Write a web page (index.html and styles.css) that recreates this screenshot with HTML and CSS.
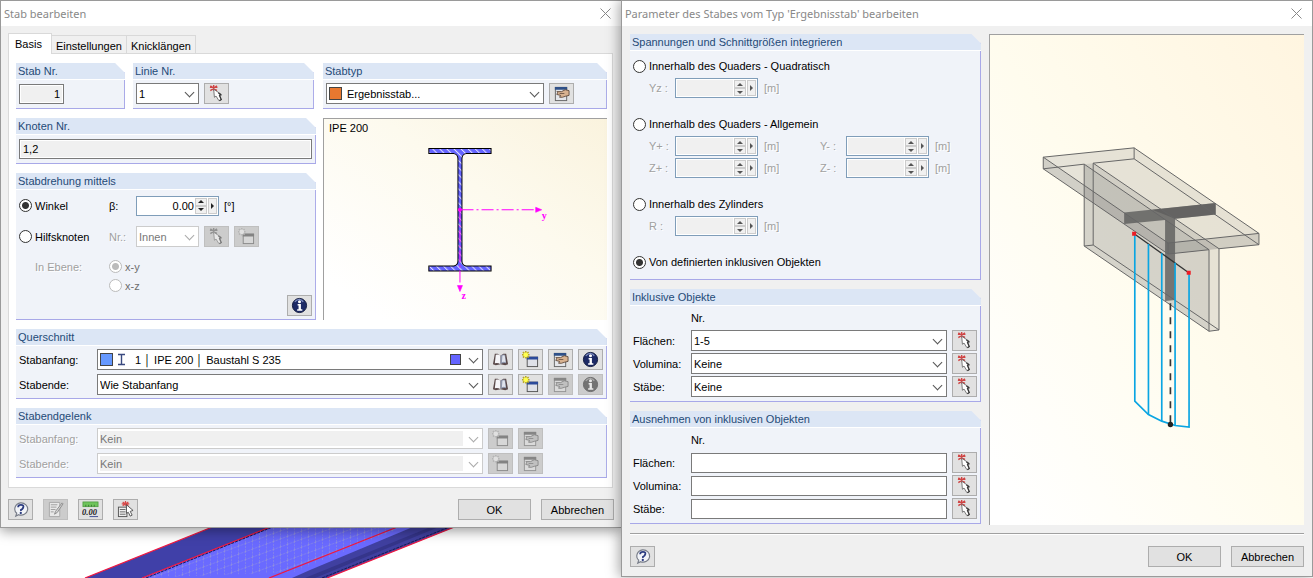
FILE: index.html
```html
<!DOCTYPE html>
<html lang="de">
<head>
  <meta charset="UTF-8" />
  <meta name="viewport" content="width=device-width, initial-scale=1.0" />
  <title>Stab bearbeiten</title>
  <link rel="stylesheet" href="styles.css">
</head>
<body>
  <!-- Icon sprites -->
  <svg class="sprites" aria-hidden="true">
    <symbol id="i-pick" viewBox="0 0 18 18">
      <path d="M2.500 1l7 5M9.500 1l-7 5M6 0v6M2 2.500h8" stroke="#d04545" stroke-width="1.500" fill="none"/>
      <path d="M6 4.500l.8 8.500 1.700-1.300 3 4.800 2.300-1-2-4.800 2-1z" fill="#fff" stroke="#666" stroke-width=".9"/>
      <path d="M11 8.500l2.800 2-1.500.6 1.800 4.400-2 1.200" stroke="#333" stroke-width="1.200" fill="none"/>
    </symbol>
    <symbol id="i-new" viewBox="0 0 18 18">
      <rect x="5.500" y="6.500" width="11" height="10" fill="#dfe1e8" stroke="#555"/>
      <path d="M5 6h12v3H5z" fill="#2c4a9a"/>
      <path d="M4 0v8M0 4h8M1 1l6 6M7 1L1 7" stroke="#b8a820" stroke-width="1.600"/>
      <circle cx="4" cy="4" r="2.500" fill="#ffff50"/>
    </symbol>
    <symbol id="i-edit" viewBox="0 0 18 18">
      <rect x="2.500" y="2.500" width="12" height="14" fill="#e4e6ea" stroke="#666"/>
      <path d="M2 2h13v3H2z" fill="#2f5088"/>
      <path d="M4 7h5l4-2 4 1v5l-4 1-3 1H7l1-2-4-1 1-2z" fill="#d8b290" stroke="#5a4538" stroke-width=".9"/>
      <path d="M7 9h5" stroke="#5a4538" stroke-width=".8"/>
    </symbol>
    <symbol id="i-book" viewBox="0 0 18 18">
      <path d="M1 14l2-11h3l3 2 3-2h3l2 11-3 1-5-1-5 1z" fill="#5a4a4a"/>
      <path d="M3 13l1-9q3-1 5 1v9q-3-2-6-1z" fill="#f5f5f8"/>
      <path d="M9 14V5q2-2 5-1l1 9q-3-1-6 1z" fill="#8f96aa"/>
      <path d="M11 5q2-1 2.500 0l1 7q-2-1-4 0z" fill="#dfe3ec"/>
    </symbol>
    <symbol id="i-info" viewBox="0 0 18 18">
      <circle cx="9" cy="9" r="7.500" fill="#1d2a66" stroke="#10183c"/>
      <path d="M4 5q5-5 9 0" stroke="#7c8bc0" stroke-width="1.500" fill="none"/>
      <circle cx="9" cy="5" r="1.600" fill="#fff"/>
      <path d="M7 7.500h3.500V13H12v1.500H6.500V13H8V9H7z" fill="#fff"/>
    </symbol>
    <symbol id="i-help" viewBox="0 0 18 18">
      <path d="M9 2a7 6.500 0 1 1-2 12.500L4 16l1-3A7 6.500 0 0 1 9 2z" fill="#f2f4f8" stroke="#777c88" stroke-width="1.200"/>
      <path d="M6.500 6.500q0-2.500 3-2.500t2.500 2.300-2.500 3v1.200" stroke="#2c3c80" stroke-width="1.900" fill="none"/>
      <circle cx="9.300" cy="12.700" r="1.200" fill="#2c3c80"/>
    </symbol>
    <symbol id="i-note" viewBox="0 0 18 18">
      <path d="M2.500 1.500h11v15h-11z" fill="#fff" stroke="#888"/>
      <path d="M4 4h7M4 6.500h6M4 9h5M4 11.500h3" stroke="#777"/>
      <path d="M16 2l-7 9-1 3 3-2 6-9z" fill="#ddd" stroke="#555"/>
    </symbol>
    <symbol id="i-units" viewBox="0 0 18 18">
      <rect x="1" y="1" width="16" height="5" fill="#6fc45c" stroke="#4d9a40" stroke-width=".8"/>
      <path d="M4 6V4M7 6V4M10 6V4M13 6V4" stroke="#2f6a28" stroke-width=".8"/>
      <path d="M8 16.500h9" stroke="#3a4a90"/>
    </symbol>
    <symbol id="i-list" viewBox="0 0 18 18">
      <rect x="1.500" y="6.500" width="9" height="10" fill="#eee" stroke="#555"/>
      <path d="M3 9h6M3 11.500h6M3 14h6" stroke="#666"/>
      <path d="M6 1l6 4M12 1L6 5M9 0v5M5 3h8" stroke="#d84a4a" stroke-width="1.300"/>
      <path d="M10 4v9l2-1 2 4 2-1-2-4 3-1z" fill="#fff" stroke="#444" stroke-width=".9"/>
    </symbol>
    <symbol id="i-close" viewBox="0 0 11 11">
      <path d="M.5.5l10 10M10.500.5l-10 10" stroke="#888" fill="none"/>
    </symbol>
  </svg>

  <main class="desktop">
    <!-- Beam model behind the dialogs -->
    <svg class="model" width="400" height="54" viewBox="0 -3 400 54" aria-hidden="true">
      <defs>
        <pattern id="mesh" width="7" height="8" patternUnits="userSpaceOnUse" patternTransform="skewY(-20)">
          <path d="M0 0h7M0 0v8" stroke="#a9a9c8" stroke-width=".7" stroke-dasharray="2 1" fill="none"/>
        </pattern>
      </defs>
      <path d="M15 51L150-3H208L72 51z" fill="#4040a8"/>
      <path d="M72 51L208-3H392L257 51z" fill="#6a6aff"/>
      <path d="M72 51L208-3H340L225 45z" fill="url(#mesh)"/>
      <path d="M222 51L240 43 350-3H392L257 51z" fill="#4040a0"/>
      <path d="M235 51L368-3H376L245 51z" fill="#35358a"/>
      <path d="M15 51L150-3M72 51L208-3M199 51L335-3M257 51L392-3" stroke="#f01840" stroke-width="1.300"/>
      <path d="M76 51L210-3M252 51L387-3" stroke="#181850" stroke-dasharray="3 1"/>
    </svg>

    <form class="dialog member">
      <header class="titlebar">
        <h1>Stab bearbeiten</h1>
        <button type="button" class="close" aria-label="Schließen"><svg><use href="#i-close"/></svg></button>
      </header>

      <div class="tabs" role="tablist">
        <button type="button" role="tab" class="tab active" aria-selected="true">Basis</button>
        <button type="button" role="tab" class="tab">Einstellungen</button>
        <button type="button" role="tab" class="tab">Knicklängen</button>
      </div>

      <div class="panel">
        <div class="basis">
          <div class="left">
            <div class="numbers">
              <section class="group">
                <h2><label for="stab">Stab Nr.</label></h2>
                <div class="row"><input id="stab" class="box short" type="text" value="1" readonly></div>
              </section>
              <section class="group">
                <h2><label for="linie">Linie Nr.</label></h2>
                <div class="row">
                  <span class="combo small"><select id="linie"><option>1</option></select></span>
                  <button type="button" class="tool" aria-label="Linie wählen"><svg><use href="#i-pick"/></svg></button>
                </div>
              </section>
            </div>

            <section class="group">
              <h2><label for="knoten">Knoten Nr.</label></h2>
              <div class="row"><input id="knoten" class="box" type="text" value="1,2" readonly></div>
            </section>

            <section class="group rotation">
              <h2>Stabdrehung mittels</h2>
              <div class="row">
                <label class="radio"><input type="radio" name="drehung" checked>Winkel</label>
                <label class="sym" for="beta">β:</label>
                <span class="spin">
                  <input id="beta" type="text" value="0.00">
                  <span class="steps"><button type="button" aria-label="Mehr"><i class="up"></i></button><button type="button" aria-label="Weniger"><i class="down"></i></button></span>
                  <button type="button" class="more" aria-label="Werte"><i></i></button>
                </span>
                <span class="unit">[°]</span>
              </div>
              <div class="row">
                <label class="radio"><input type="radio" name="drehung">Hilfsknoten</label>
                <label class="sym off" for="hilf">Nr.:</label>
                <span class="combo small"><select id="hilf" disabled><option>Innen</option></select></span>
                <button type="button" class="tool" disabled aria-label="Knoten wählen"><svg><use href="#i-pick"/></svg></button>
                <button type="button" class="tool" disabled aria-label="Neuer Knoten"><svg><use href="#i-new"/></svg></button>
              </div>
              <div class="row plane">
                <span class="plane-label off">In Ebene:</span>
                <div class="plane-options">
                  <label class="radio"><input type="radio" name="ebene" checked disabled>x-y</label>
                  <label class="radio"><input type="radio" name="ebene" disabled>x-z</label>
                </div>
              </div>
              <div class="row end">
                <button type="button" class="tool" aria-label="Info"><svg><use href="#i-info"/></svg></button>
              </div>
            </section>
          </div>

          <div class="right">
            <section class="group">
              <h2><label for="typ">Stabtyp</label></h2>
              <div class="row">
                <span class="combo typ"><i class="swatch orange"></i><select id="typ"><option>Ergebnisstab...</option></select></span>
                <button type="button" class="tool" aria-label="Stabtyp bearbeiten"><svg><use href="#i-edit"/></svg></button>
              </div>
            </section>

            <div class="preview section-preview">
              <svg viewBox="0 0 282 200" role="img" aria-label="IPE 200">
                <defs>
                  <pattern id="hatch" width="5" height="5" patternUnits="userSpaceOnUse" patternTransform="rotate(-45)">
                    <rect width="5" height="5" fill="#6464ff"/>
                    <path d="M0 0v5" stroke="#dcdcff" stroke-width="2"/>
                  </pattern>
                </defs>
                <text x="5" y="13" class="name">IPE 200</text>
                <path d="M104.500 29.500h62v5h-25q-4 1-4 5v102q0 4 4 5h25v5h-62v-5h25q4-1 4-5v-102q0-4-4-5h-25z" fill="url(#hatch)" stroke="#000"/>
                <path d="M137 90.500h75" stroke="#f0f" stroke-dasharray="12 3 2 3" />
                <path d="M135.500 91v75" stroke="#f0f" stroke-dasharray="12 3 2 3"/>
                <path d="M211 88v5l6-2.500zM133 166h5l-2.500 6z" fill="#f0f" stroke="#f0f" stroke-width=".6"/>
                <circle cx="135.500" cy="90.500" r="2" fill="#f0f"/>
                <text x="217" y="100" class="axis">y</text>
                <text x="137" y="179" class="axis">z</text>
              </svg>
            </div>
          </div>
        </div>

        <section class="group">
          <h2>Querschnitt</h2>
          <div class="sections">
            <label for="q1">Stabanfang:</label>
            <span class="combo profile">
              <i class="swatch blue"></i>
              <svg class="ibeam" viewBox="0 0 9 13"><path d="M1 1.500h7M1 11.500h7M4.500 1.500v10" stroke="#3a4a80" stroke-width="1.400" fill="none"/></svg>
              <select id="q1"><option>1 │ IPE 200 │ Baustahl S 235</option></select>
              <i class="swatch violet"></i>
            </span>
            <button type="button" class="tool" aria-label="Bibliothek"><svg><use href="#i-book"/></svg></button>
            <button type="button" class="tool" aria-label="Neu"><svg><use href="#i-new"/></svg></button>
            <button type="button" class="tool" aria-label="Bearbeiten"><svg><use href="#i-edit"/></svg></button>
            <button type="button" class="tool" aria-label="Info"><svg><use href="#i-info"/></svg></button>

            <label for="q2">Stabende:</label>
            <span class="combo"><select id="q2"><option>Wie Stabanfang</option></select></span>
            <button type="button" class="tool" aria-label="Bibliothek"><svg><use href="#i-book"/></svg></button>
            <button type="button" class="tool" aria-label="Neu"><svg><use href="#i-new"/></svg></button>
            <button type="button" class="tool" disabled aria-label="Bearbeiten"><svg><use href="#i-edit"/></svg></button>
            <button type="button" class="tool" disabled aria-label="Info"><svg><use href="#i-info"/></svg></button>
          </div>
        </section>

        <section class="group">
          <h2>Stabendgelenk</h2>
          <div class="sections hinges">
            <label class="off" for="g1">Stabanfang:</label>
            <span class="combo"><select id="g1" disabled><option>Kein</option></select></span>
            <button type="button" class="tool" disabled aria-label="Neu"><svg><use href="#i-new"/></svg></button>
            <button type="button" class="tool" disabled aria-label="Bearbeiten"><svg><use href="#i-edit"/></svg></button>

            <label class="off" for="g2">Stabende:</label>
            <span class="combo"><select id="g2" disabled><option>Kein</option></select></span>
            <button type="button" class="tool" disabled aria-label="Neu"><svg><use href="#i-new"/></svg></button>
            <button type="button" class="tool" disabled aria-label="Bearbeiten"><svg><use href="#i-edit"/></svg></button>
          </div>
        </section>
      </div>

      <footer>
        <button type="button" class="tool" aria-label="Hilfe"><svg><use href="#i-help"/></svg></button>
        <button type="button" class="tool" disabled aria-label="Kommentar"><svg><use href="#i-note"/></svg></button>
        <button type="button" class="tool" aria-label="Einheiten"><svg viewBox="0 0 18 18"><use href="#i-units"/><text x="0" y="15" class="digits">0.00</text></svg></button>
        <button type="button" class="tool" aria-label="Auswahl"><svg><use href="#i-list"/></svg></button>
        <button type="button" class="btn first">OK</button>
        <button type="button" class="btn">Abbrechen</button>
      </footer>
    </form>

    <form class="dialog params">
      <header class="titlebar">
        <h1>Parameter des Stabes vom Typ 'Ergebnisstab' bearbeiten</h1>
        <button type="button" class="close" aria-label="Schließen"><svg><use href="#i-close"/></svg></button>
      </header>

      <div class="content">
        <div class="options">
          <section class="group">
            <h2>Spannungen und Schnittgrößen integrieren</h2>
            <div class="methods">
              <div class="method">
                <label class="radio"><input type="radio" name="methode">Innerhalb des Quaders - Quadratisch</label>
                <div class="dims">
                  <label class="off" for="yz">Yz :</label>
                  <span class="spin"><input id="yz" type="text" disabled><span class="steps"><button type="button" disabled aria-label="Mehr"><i class="up"></i></button><button type="button" disabled aria-label="Weniger"><i class="down"></i></button></span><button type="button" class="more" disabled aria-label="Werte"><i></i></button></span>
                  <span class="off unit">[m]</span>
                </div>
              </div>
              <div class="method">
                <label class="radio"><input type="radio" name="methode">Innerhalb des Quaders - Allgemein</label>
                <div class="dims">
                  <label class="off" for="yp">Y+ :</label>
                  <span class="spin"><input id="yp" type="text" disabled><span class="steps"><button type="button" disabled aria-label="Mehr"><i class="up"></i></button><button type="button" disabled aria-label="Weniger"><i class="down"></i></button></span><button type="button" class="more" disabled aria-label="Werte"><i></i></button></span>
                  <span class="off unit">[m]</span>
                  <label class="off" for="ym">Y- :</label>
                  <span class="spin"><input id="ym" type="text" disabled><span class="steps"><button type="button" disabled aria-label="Mehr"><i class="up"></i></button><button type="button" disabled aria-label="Weniger"><i class="down"></i></button></span><button type="button" class="more" disabled aria-label="Werte"><i></i></button></span>
                  <span class="off unit">[m]</span>
                </div>
                <div class="dims">
                  <label class="off" for="zp">Z+ :</label>
                  <span class="spin"><input id="zp" type="text" disabled><span class="steps"><button type="button" disabled aria-label="Mehr"><i class="up"></i></button><button type="button" disabled aria-label="Weniger"><i class="down"></i></button></span><button type="button" class="more" disabled aria-label="Werte"><i></i></button></span>
                  <span class="off unit">[m]</span>
                  <label class="off" for="zm">Z- :</label>
                  <span class="spin"><input id="zm" type="text" disabled><span class="steps"><button type="button" disabled aria-label="Mehr"><i class="up"></i></button><button type="button" disabled aria-label="Weniger"><i class="down"></i></button></span><button type="button" class="more" disabled aria-label="Werte"><i></i></button></span>
                  <span class="off unit">[m]</span>
                </div>
              </div>
              <div class="method">
                <label class="radio"><input type="radio" name="methode">Innerhalb des Zylinders</label>
                <div class="dims">
                  <label class="off" for="r">R :</label>
                  <span class="spin"><input id="r" type="text" disabled><span class="steps"><button type="button" disabled aria-label="Mehr"><i class="up"></i></button><button type="button" disabled aria-label="Weniger"><i class="down"></i></button></span><button type="button" class="more" disabled aria-label="Werte"><i></i></button></span>
                  <span class="off unit">[m]</span>
                </div>
              </div>
              <div class="method">
                <label class="radio"><input type="radio" name="methode" checked>Von definierten inklusiven Objekten</label>
              </div>
            </div>
          </section>

          <section class="group">
            <h2>Inklusive Objekte</h2>
            <div class="objects">
              <span class="nr">Nr.</span>
              <label for="f1">Flächen:</label>
              <span class="combo"><select id="f1"><option>1-5</option></select></span>
              <button type="button" class="tool" aria-label="Flächen wählen"><svg><use href="#i-pick"/></svg></button>
              <label for="v1">Volumina:</label>
              <span class="combo"><select id="v1"><option>Keine</option></select></span>
              <button type="button" class="tool" aria-label="Volumina wählen"><svg><use href="#i-pick"/></svg></button>
              <label for="s1">Stäbe:</label>
              <span class="combo"><select id="s1"><option>Keine</option></select></span>
              <button type="button" class="tool" aria-label="Stäbe wählen"><svg><use href="#i-pick"/></svg></button>
            </div>
          </section>

          <section class="group">
            <h2>Ausnehmen von inklusiven Objekten</h2>
            <div class="objects">
              <span class="nr">Nr.</span>
              <label for="f2">Flächen:</label>
              <input id="f2" class="box" type="text">
              <button type="button" class="tool" aria-label="Flächen wählen"><svg><use href="#i-pick"/></svg></button>
              <label for="v2">Volumina:</label>
              <input id="v2" class="box" type="text">
              <button type="button" class="tool" aria-label="Volumina wählen"><svg><use href="#i-pick"/></svg></button>
              <label for="s2">Stäbe:</label>
              <input id="s2" class="box" type="text">
              <button type="button" class="tool" aria-label="Stäbe wählen"><svg><use href="#i-pick"/></svg></button>
            </div>
          </section>
        </div>

        <div class="preview beam-preview">
          <svg viewBox="0 -258 942 1473" role="img" aria-label="Ergebnisstab">
            <g fill="#777" fill-opacity=".18" stroke="none">
              <path d="M160 109L433 81 808 338V372L688 384 658 387 535 400 160 144z"/>
              <path d="M160 109L535 367V400L160 144z"/>
              <path d="M283 130L310 127 688 384V628L658 632 283 376z"/>
              <path d="M283 130L658 387V632L283 376z" fill-opacity=".15"/>
              <path d="M535 367L808 338V372L535 400z"/>
            </g>
            <path d="M403 275L678 247V281L556 294V538L526 541V298L403 310z" fill="#555" fill-opacity=".75"/>
            <path d="M488 267L678 247V281L556 294z" fill="#555" fill-opacity=".6"/>
            <g fill="none" stroke="#666" stroke-width="3">
              <path d="M160 109L433 81V114L310 127V373L283 376V130L160 144z"/>
              <path d="M535 367L808 338V372L688 384V628L658 632V387L535 400z"/>
              <path d="M160 109L535 367M433 81L808 338M433 114L808 372M310 127L688 384M310 373L688 628M283 376L658 632M283 130L658 387M160 144L535 400"/>
              <path d="M433 339L597 456" stroke="#333" stroke-width="4"/>
            </g>
            <g fill="none" stroke="#0aa5e2" stroke-width="5">
              <path d="M435 339V842L476 882 516 902 556 915 598 920V456"/>
              <path d="M476 370V882M516 398V902M556 426V915"/>
            </g>
            <path d="M542 548V912" stroke="#333" stroke-width="5" stroke-dasharray="21 21"/>
            <circle cx="542" cy="912" r="8" fill="#222"/>
            <path d="M427 333h12v12h-12zM591 450h12v12h-12z" fill="#ed1c24"/>
          </svg>
        </div>
      </div>

      <footer>
        <button type="button" class="tool" aria-label="Hilfe"><svg><use href="#i-help"/></svg></button>
        <button type="button" class="btn first">OK</button>
        <button type="button" class="btn">Abbrechen</button>
      </footer>
    </form>
  </main>
</body>
</html>
```
FILE: styles.css
```css
:root {
  --face: #f0f0f0;
  --group-bg: #f0f3f9;
  --group-head: #dce6f5;
  --group-edge: #a8a8e8;
  --head-text: #1f4a77;
  --btn-bg: #e1e1e1;
  --btn-border: #adadad;
  --field-border: #7a7a7a;
}

* {
  margin: 0;
  padding: 0;
  box-sizing: border-box;
}

body {
  background: #fff;
  color: #000;
  font: 11px/20px "Liberation Sans", Arial, sans-serif;
}

button, input, select {
  font: inherit;
  color: inherit;
  border-radius: 0;
}

svg { display: block; }

.sprites {
  position: absolute;
  width: 0;
  height: 0;
}

.desktop {
  position: relative;
  display: flex;
  align-items: flex-start;
  min-height: 100vh;
}

.model {
  position: absolute;
  left: 70px;
  bottom: 0;
}

/* Dialog windows */
.dialog {
  position: relative;
  background: var(--face);
  border: 1px solid #9a9a9a;
}
.member {
  flex: 621 1 0;
  border-right: 0;
  padding: 0 8px 0 7px;
  box-shadow: 0 3px 12px rgba(0, 0, 0, 0.4);
}
.params {
  flex: 692 1 0;
  padding: 0 8px;
  box-shadow: -2px 0 12px rgba(0, 0, 0, 0.35);
}

.titlebar {
  display: flex;
  align-items: center;
  justify-content: space-between;
  height: 25px;
  margin: 0 -8px;
  padding: 0 10px 0 3px;
  background: #fff;
}
.member .titlebar { margin-left: -7px; }
.titlebar h1 {
  font: 11px/20px "Noto Sans", "Open Sans", sans-serif;
  color: #888;
}
.close {
  border: 0;
  background: none;
}
.close svg {
  width: 11px;
  height: 11px;
}

/* Tabs */
.tabs {
  display: flex;
  align-items: flex-end;
  height: 27px;
}
.tab {
  height: 18px;
  padding: 0 4px;
  border: 1px solid #d9d9d9;
  border-width: 1px 1px 0 0;
  background: var(--face);
}
.tab.active {
  position: relative;
  height: 21px;
  margin-bottom: -1px;
  padding: 0 9px 2px 6px;
  border-left-width: 1px;
  background: #fff;
}
.panel {
  display: flex;
  flex-direction: column;
  gap: 9px;
  padding: 9px 5px 9px 7px;
  border: 1px solid #d9d9d9;
  background: #fff;
}
.basis {
  display: grid;
  grid-template-columns: 300fr 284fr;
  gap: 7px;
}
.left, .right, .options {
  display: flex;
  flex-direction: column;
  gap: 9px;
}
.numbers {
  display: grid;
  grid-template-columns: 109fr 181fr;
  gap: 8px;
  padding-right: 2px;
}

/* Group box with cut corner */
.group {
  background: var(--group-bg);
  border-right: 1px solid var(--group-edge);
  border-bottom: 1px solid var(--group-edge);
  clip-path: polygon(0 0, calc(100% - 10px) 0, 100% 10px, 100% 100%, 0 100%);
}
.group h2 {
  height: 17px;
  margin-right: -1px;
  padding-left: 2px;
  border-bottom: 1px solid #fff;
  background: var(--group-head);
  color: var(--head-text);
  font: 11px/16px "Liberation Sans", Arial, sans-serif;
}
.row {
  display: flex;
  align-items: center;
  gap: 5px;
  min-height: 21px;
  margin: 3px 3px 4px;
}

/* Fields */
.box {
  width: 100%;
  height: 20px;
  padding: 0 3px;
  border: 1px solid var(--field-border);
  background: #fff;
}
.box:read-only {
  background: var(--face);
  box-shadow: inset 0 0 0 1px #fff;
}
.box.short {
  width: 45px;
  text-align: right;
}
.combo {
  position: relative;
  display: flex;
  flex: 1;
  min-width: 0;
}
.combo.small { flex: 0 0 63px; }
.combo.typ { flex: 0 1 218px; }
.combo select {
  appearance: none;
  width: 100%;
  height: 21px;
  padding: 0 20px 0 2px;
  border: 1px solid var(--field-border);
  background: #fff;
}
.combo::after {
  content: "";
  position: absolute;
  top: 6px;
  right: 6px;
  width: 6px;
  height: 6px;
  border: solid #555;
  border-width: 0 1px 1px 0;
  transform: rotate(45deg);
  pointer-events: none;
}
.combo select:disabled {
  border-color: #ccc;
  color: #777;
  opacity: 1;
}
.combo:has(:disabled)::after { border-color: #aaa; }
.hinges select:disabled {
  background: linear-gradient(var(--face), var(--face)) 2px 2px / calc(100% - 21px) calc(100% - 4px) no-repeat #fff;
}
.combo.typ select { padding-left: 20px; }
.combo.profile select { padding-left: 37px; }
.swatch {
  position: absolute;
  top: 4px;
  left: 3px;
  width: 13px;
  height: 13px;
  border: 1px solid #444;
}
.orange { background: #e87830; }
.blue { background: #6699ff; }
.violet {
  top: 5px;
  left: auto;
  right: 22px;
  width: 11px;
  height: 11px;
  background: #6464ff;
}
.ibeam {
  position: absolute;
  top: 4px;
  left: 20px;
  width: 9px;
  height: 13px;
}

.spin {
  display: flex;
  gap: 1px;
  flex: none;
  width: 83px;
  height: 20px;
  padding: 1px;
  border: 1px solid #7f9db9;
  background: #fff;
}
.spin input {
  flex: 1;
  min-width: 0;
  border: 0;
  text-align: right;
  background: #fff;
}
.spin input:disabled { background: var(--face); }
.steps {
  display: flex;
  flex-direction: column;
  width: 12px;
}
.spin button {
  display: flex;
  flex: 1;
  align-items: center;
  justify-content: center;
  border: 1px solid #ccc;
  background: var(--face);
}
.spin .more {
  flex: none;
  width: 9px;
}
.up, .down, .more i {
  width: 0;
  height: 0;
  border: solid transparent;
}
.up { border-width: 0 3px 3px; border-bottom-color: #222; }
.down { border-width: 3px 3px 0; border-top-color: #222; }
.more i { border-width: 3px 0 3px 3px; border-left-color: #222; }
.spin button:disabled i { opacity: 0.75; }

/* Radios */
.radio {
  display: flex;
  align-items: center;
  gap: 3px;
  white-space: nowrap;
}
.radio input {
  appearance: none;
  width: 13px;
  height: 13px;
  border: 1px solid #333;
  border-radius: 50%;
  background: #fff;
}
.radio input:checked {
  background: radial-gradient(circle, #333 3px, #fff 4px);
}
.radio input:disabled {
  border-color: #bbb;
}
.radio input:checked:disabled {
  background: radial-gradient(circle, #bbb 3px, #fff 4px);
}
.radio:has(:disabled) { color: #6d6d6d; }

.off {
  color: #a0a0a0;
  text-shadow: 1px 1px #fff;
}

/* Icon and push buttons */
.tool {
  display: flex;
  flex: none;
  align-items: center;
  justify-content: center;
  width: 25px;
  height: 21px;
  border: 1px solid var(--btn-border);
  background: var(--btn-bg);
}
.tool svg {
  width: 17px;
  height: 17px;
}
.tool:disabled {
  background: #ccc;
  border-color: #bfbfbf;
}
.tool:disabled svg {
  filter: grayscale(1);
  opacity: 0.55;
}
.digits {
  font: italic bold 9px "Liberation Serif", serif;
  fill: #222;
}
.btn {
  width: 73px;
  height: 21px;
  border: 1px solid var(--btn-border);
  background: var(--btn-bg);
}
.first { margin-left: auto; }
footer {
  display: flex;
  gap: 10px;
  padding: 11px 0 7px;
}
.member footer { margin-right: -1px; }

/* Rotation group */
.rotation .row { margin: 5px 3px 10px; }
.rotation .row + .row { margin-top: 0; }
.rotation .radio { width: 90px; }
.rotation .row > .radio,
.rotation .sym { margin-right: -5px; }
.sym { width: 27px; }
.rotation .plane {
  align-items: flex-start;
  gap: 0;
  margin-bottom: 0;
  padding-left: 16px;
}
.plane-label { width: 74px; }
.plane-options .radio { height: 19px; }
.rotation .end {
  justify-content: flex-end;
  margin-bottom: 3px;
}

/* Label / combo / tool grids */
.sections {
  display: grid;
  grid-template-columns: 73px 1fr repeat(4, 25px);
  gap: 4px 5px;
  align-items: center;
  padding: 3px;
}
.hinges label { grid-column: 1; }

.methods {
  display: flex;
  flex-direction: column;
  gap: 16px;
  padding: 5px 3px 7px;
}
.method {
  display: flex;
  flex-direction: column;
  gap: 2px;
}
.dims {
  display: grid;
  grid-template-columns: 26px 83px 62px 26px 83px 1fr;
  padding-left: 16px;
}
.dims .unit { padding-left: 6px; }

.objects {
  display: grid;
  grid-template-columns: 53px 1fr 25px;
  gap: 2px 5px;
  align-items: center;
  padding: 2px 3px 4px;
}
.objects .nr { grid-column: 2 / 4; }

/* Previews */
.preview {
  flex: 1;
  border: 1px solid #a0a0a0;
  border-width: 1px 0 0 1px;
}
.section-preview { background: linear-gradient(to top right, #fff 10%, #fdfaee 60%, #faf3de); }
.name {
  font-size: 11px;
}
.axis {
  font: bold 10px "Liberation Serif", serif;
  fill: #f0f;
}

.content {
  display: grid;
  grid-template-columns: 352fr 315fr;
  gap: 8px;
  padding: 8px 0;
  border-bottom: 1px solid #a0a0a0;
  box-shadow: 0 1px #fff;
}
.beam-preview { background: linear-gradient(to top right, #fff 5%, #fffcee 50%, #fff5e0); }
.params footer { padding: 12px 0 9px; }
```
